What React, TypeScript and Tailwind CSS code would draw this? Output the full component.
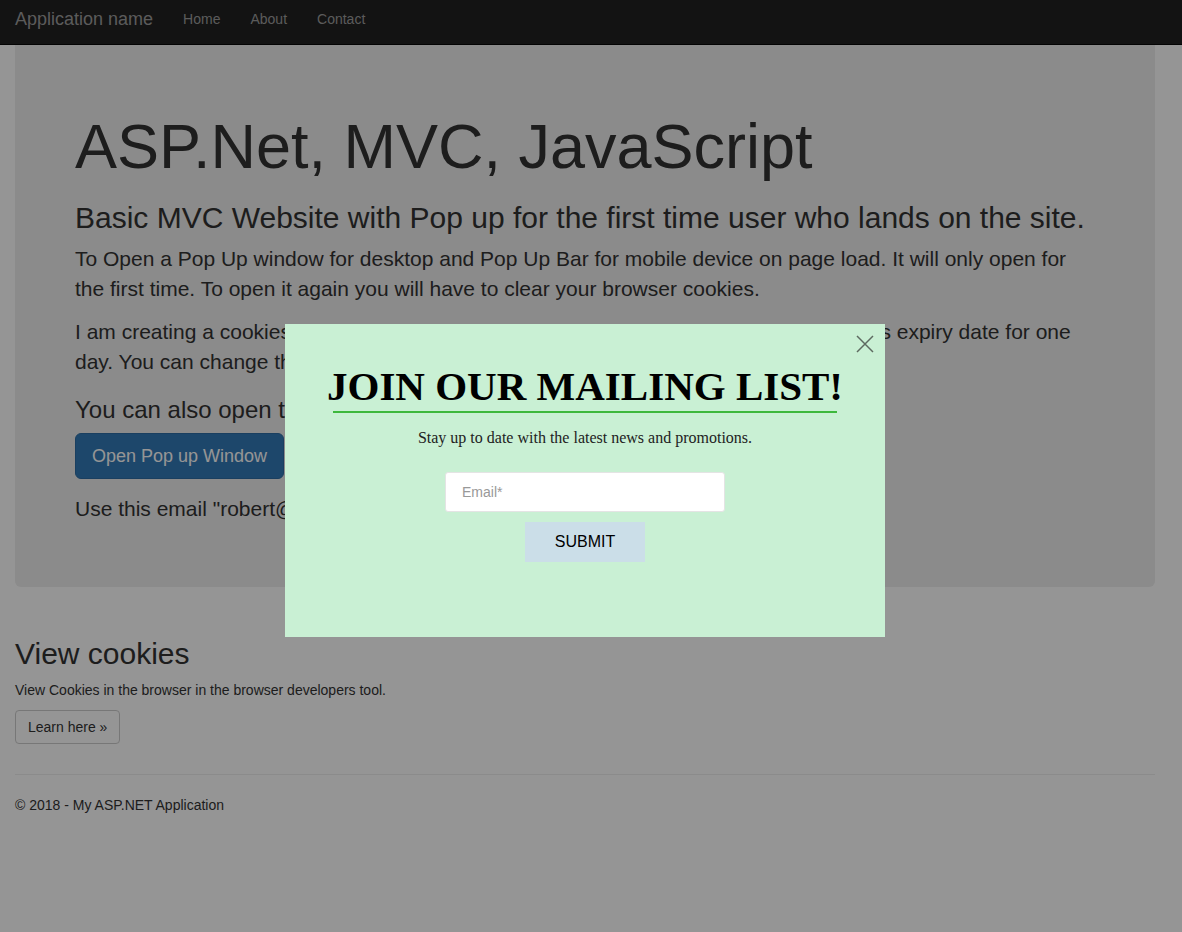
import React from "react";

export default function App() {
  const sans = { fontFamily: '"Liberation Sans", Arial, Helvetica, sans-serif' };
  const serif = { fontFamily: '"Liberation Serif", "Times New Roman", serif' };
  return (
    <div className="relative min-h-[932px] w-[1182px] bg-white text-[#333] overflow-hidden" style={sans}>
      <nav className="h-[45px] bg-[#222] border-b border-[#080808] flex items-start pt-[9px]">
        <span className="pl-[15px] pr-[15px] text-[18px] text-[#9d9d9d] leading-[20px]">Application name</span>
        <span className="px-[15px] text-[14px] leading-[20px] text-[#9d9d9d]">Home</span>
        <span className="px-[15px] text-[14px] leading-[20px] text-[#9d9d9d]">About</span>
        <span className="px-[15px] text-[14px] leading-[20px] text-[#9d9d9d]">Contact</span>
      </nav>
      <div className="w-[1170px] px-[15px]">
        <div className="bg-[#eee] rounded-b-[6px] px-[60px] pt-[67px] pb-[48px]">
          <h1 className="text-[63px] leading-[69px] m-0">ASP.Net, MVC, JavaScript</h1>
          <h2 className="text-[30px] leading-[33px] mt-[20px] mb-[10px]">
            Basic MVC Website with Pop up for the first time user who lands on the site.
          </h2>
          <p className="text-[21px] leading-[30px] mb-[13px]">
            To Open a Pop Up window for desktop and Pop Up Bar for mobile device on page load. It will only open for the first time. To open it again you will have to clear your browser cookies.
          </p>
          <p className="text-[21px] leading-[30px] mb-[15px]">
            I am creating a cookies in the Browser when a user lands on the site which sets cookies expiry date for one day. You can change the expiry date in the code.
          </p>
          <h3 className="text-[24px] leading-[26px] mt-[20px] mb-[10px]">
            You can also open the pop up window by clicking the button below.
          </h3>
          <p className="mb-[15px]">
            <span className="inline-block bg-[#337ab7] border border-[#2e6da4] text-white text-[18px] leading-[24px] px-[16px] py-[10px] rounded-[6px]">
              Open Pop up Window
            </span>
          </p>
          <p className="text-[21px] leading-[30px] mb-[15px]">
            Use this email "robert@example.com" to test the subscription form.
          </p>
        </div>
        <div className="pt-[50px]">
          <h2 className="text-[30px] leading-[33px] mb-[10px]">View cookies</h2>
          <p className="text-[14px] leading-[20px] mb-[10px]">View Cookies in the browser in the browser developers tool.</p>
          <p className="mb-[10px]">
            <span className="inline-block border border-[#ccc] bg-white text-[14px] leading-[20px] px-[12px] py-[6px] rounded-[4px] text-[#333]">
              Learn here »
            </span>
          </p>
          <hr className="mt-[30px] mb-[20px] border-0 border-t border-[#eee]" />
          <p className="text-[14px] leading-[20px]">© 2018 - My ASP.NET Application</p>
        </div>
      </div>

      <div className="absolute inset-0 bg-black/[0.415]" />

      <div className="absolute left-[285px] top-[324px] w-[600px] h-[313px] bg-[#c9f0d4] flex flex-col items-center">
        <svg className="absolute left-[571px] top-[11px]" width="18" height="18" viewBox="0 0 18 18">
          <path d="M1 1 L17 17 M17 1 L1 17" stroke="#5d6a60" strokeWidth="1.5" fill="none" />
        </svg>
        <div className="mt-[38px] text-[41px] leading-[48px] font-bold text-black" style={serif}>
          JOIN OUR MAILING LIST!
        </div>
        <div className="w-[504px] h-[2px] bg-[#3db83d] mt-[1px]" />
        <div className="mt-[16px] text-[16px] leading-[18px] text-[#222]" style={serif}>
          Stay up to date with the latest news and promotions.
        </div>
        <div className="mt-[25px] w-[280px] h-[40px] bg-white border border-[#e4e4e4] rounded-[3px] flex items-center pl-[16px] text-[14px] text-[#999]">
          Email*
        </div>
        <div className="mt-[10px] w-[120px] h-[40px] bg-[#cbdee8] flex items-center justify-center text-[16px] text-black">
          SUBMIT
        </div>
      </div>
    </div>
  );
}
